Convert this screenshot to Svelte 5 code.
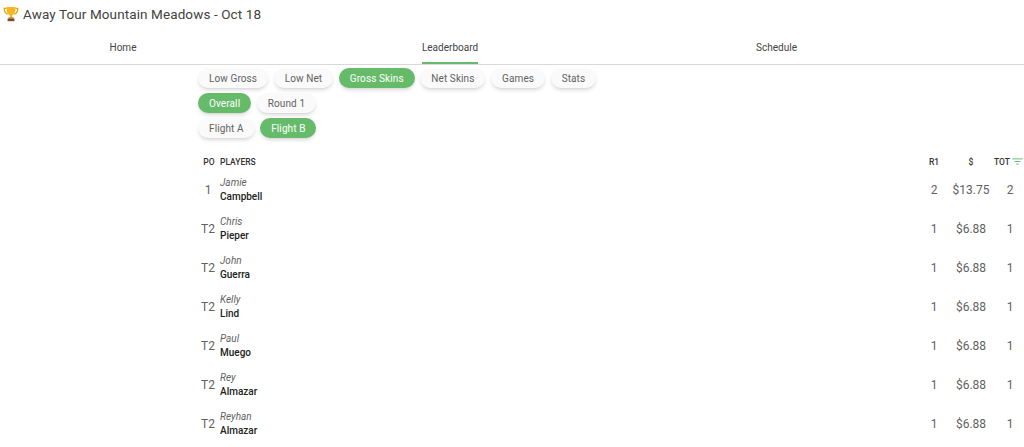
<script>
  const mainTabs = [
    { label: 'Home' },
    { label: 'Leaderboard', active: true },
    { label: 'Schedule' }
  ];

  const chipRows = [
    [
      { label: 'Low Gross' },
      { label: 'Low Net' },
      { label: 'Gross Skins', active: true },
      { label: 'Net Skins' },
      { label: 'Games' },
      { label: 'Stats' }
    ],
    [{ label: 'Overall', active: true }, { label: 'Round 1' }],
    [{ label: 'Flight A' }, { label: 'Flight B', active: true }]
  ];

  const players = [
    { pos: '1', first: 'Jamie', last: 'Campbell', r1: 2, money: '$13.75', tot: 2 },
    { pos: 'T2', first: 'Chris', last: 'Pieper', r1: 1, money: '$6.88', tot: 1 },
    { pos: 'T2', first: 'John', last: 'Guerra', r1: 1, money: '$6.88', tot: 1 },
    { pos: 'T2', first: 'Kelly', last: 'Lind', r1: 1, money: '$6.88', tot: 1 },
    { pos: 'T2', first: 'Paul', last: 'Muego', r1: 1, money: '$6.88', tot: 1 },
    { pos: 'T2', first: 'Rey', last: 'Almazar', r1: 1, money: '$6.88', tot: 1 },
    { pos: 'T2', first: 'Reyhan', last: 'Almazar', r1: 1, money: '$6.88', tot: 1 }
  ];
</script>

<div class="page">
  <header class="title-bar">
    <svg class="trophy" viewBox="0 0 16 16" aria-hidden="true">
      <path d="M3.6 2.4H1.2c0 3 1 5 3.6 5.6M12.4 2.4h2.4c0 3-1 5-3.6 5.6" fill="none" stroke="#e8a317" stroke-width="1.3"/>
      <path d="M3.4 1h9.2c0 4.4-1 7.4-3.6 8.4v2H7v-2C4.4 8.4 3.4 5.4 3.4 1z" fill="#f5b81f"/>
      <rect x="5.6" y="11.2" width="4.8" height="1.2" fill="#c98a12"/>
      <rect x="4.6" y="12.4" width="6.8" height="2.8" fill="#7a4a2a"/>
    </svg>
    <span class="title">Away Tour Mountain Meadows - Oct 18</span>
  </header>

  <nav class="tabs">
    {#each mainTabs as tab (tab.label)}
      <div class="tab">
        <span class="tab-label" class:active={tab.active}>{tab.label}</span>
      </div>
    {/each}
  </nav>

  <main class="content">
    <div class="chips">
      {#each chipRows as row}
        <div class="chip-row">
          {#each row as chip (chip.label)}
            <button class="chip" class:active={chip.active}>{chip.label}</button>
          {/each}
        </div>
      {/each}
    </div>

    <table class="board">
      <colgroup>
        <col class="col-pos" />
        <col />
        <col class="col-r1" />
        <col class="col-money" />
        <col class="col-tot" />
      </colgroup>
      <thead>
        <tr>
          <th>PO</th>
          <th class="left">PLAYERS</th>
          <th>R1</th>
          <th>$</th>
          <th class="tot-head">
            TOT<svg class="sort" viewBox="0 0 12 8" aria-hidden="true">
              <path d="M0 1h12M2.5 4h7M4.5 7h3" stroke="#66bb6a" stroke-width="1.1" fill="none"/>
            </svg>
          </th>
        </tr>
      </thead>
      <tbody>
        {#each players as p (p.first)}
          <tr>
            <td class="num pos">{p.pos}</td>
            <td class="name">
              <div class="first">{p.first}</div>
              <div class="last">{p.last}</div>
            </td>
            <td class="num">{p.r1}</td>
            <td class="num">{p.money}</td>
            <td class="num tot">{p.tot}</td>
          </tr>
        {/each}
      </tbody>
    </table>
  </main>
</div>

<style>
  :global(body) {
    margin: 0;
    background: #fff;
  }

  .page {
    height: 447px;
    overflow: hidden;
    font-family: Roboto, "Liberation Sans", sans-serif;
    color: rgba(0, 0, 0, 0.87);
  }

  .title-bar {
    display: flex;
    align-items: center;
    gap: 4px;
    height: 27px;
    padding-left: 3px;
  }

  .trophy {
    width: 16px;
    height: 16px;
    flex-shrink: 0;
  }

  .title {
    font-size: 13.5px;
    letter-spacing: 0.1px;
    color: #424242;
  }

  .tabs {
    display: grid;
    grid-template-columns: 246px 408px 245px;
    height: 38px;
    padding-top: 3px;
    box-sizing: border-box;
    border-bottom: 1px solid #d8d8d8;
  }

  .tab {
    display: flex;
    justify-content: center;
  }

  .tab-label {
    display: flex;
    align-items: center;
    height: 34px;
    box-sizing: border-box;
    font-size: 10px;
    color: #444;
  }

  .tab-label.active {
    padding-top: 2px;
    border-bottom: 2px solid #66bb6a;
  }

  .content {
    margin-left: 198px;
  }

  .chips {
    display: flex;
    flex-direction: column;
    gap: 5px;
    padding-top: 3px;
  }

  .chip-row {
    display: flex;
    gap: 5.6px;
  }

  .chip {
    height: 20px;
    padding: 0 11px;
    border: none;
    border-radius: 10px;
    background: #fafafa;
    font-family: inherit;
    font-size: 10px;
    letter-spacing: 0.1px;
    color: #616161;
    box-shadow: 0 3px 4px -1px rgba(0, 0, 0, 0.14), 0 1px 2px rgba(0, 0, 0, 0.04);
  }

  .chip.active {
    background: #66bb6a;
    color: #fff;
  }

  .board {
    width: 826px;
    margin-top: 15px;
    table-layout: fixed;
    border-collapse: collapse;
  }

  .col-pos {
    width: 22px;
  }

  .col-r1 {
    width: 36px;
  }

  .col-money {
    width: 38px;
  }

  .col-tot {
    width: 34px;
  }

  th {
    height: 17px;
    padding: 0;
    font-size: 8.5px;
    font-weight: 500;
    color: #333;
    text-align: center;
  }

  th.left {
    text-align: left;
  }

  .tot-head {
    white-space: nowrap;
    text-align: left;
    padding-left: 4px;
  }

  .sort {
    width: 11px;
    height: 7px;
    margin-left: 2px;
  }

  td {
    height: 39px;
    padding: 0;
    box-sizing: border-box;
  }

  .num {
    font-size: 12px;
    color: #616161;
    text-align: center;
  }

  .pos {
    padding-right: 2px;
  }

  .tot {
    padding-left: 6px;
  }

  .name {
    padding-top: 1px;
  }

  .first {
    font-size: 10px;
    font-style: italic;
    line-height: 14px;
    color: #616161;
  }

  .last {
    font-size: 10px;
    font-weight: 500;
    line-height: 14px;
    color: #222;
  }
</style>
